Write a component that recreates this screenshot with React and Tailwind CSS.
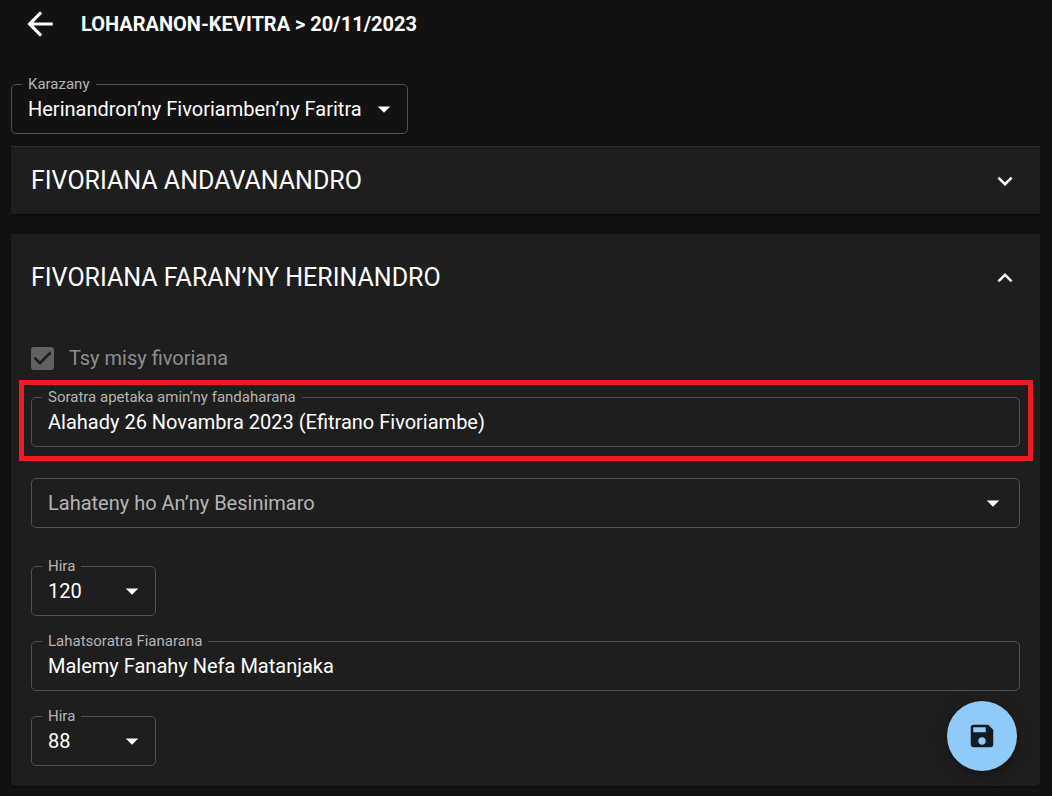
import { useId, useState } from "react";

function Svg({ d, className, viewBox = "0 0 24 24" }) {
  return (
    <svg viewBox={viewBox} fill="currentColor" aria-hidden="true" className={className}>
      <path d={d} />
    </svg>
  );
}

const ICONS = {
  back: "M20 11H7.83l5.59-5.59L12 4l-8 8 8 8 1.41-1.41L7.83 13H20v-2z",
  expand: "M16.59 8.59 12 13.17 7.41 8.59 6 10l6 6 6-6z",
  dropdown: "M7 10l5 5 5-5z",
  save: "M17 3H5c-1.11 0-2 .9-2 2v14c0 1.1.89 2 2 2h14c1.1 0 2-.9 2-2V7l-4-4zm-5 16c-1.66 0-3-1.34-3-3s1.34-3 3-3 3 1.34 3 3-1.34 3-3 3zm3-10H5V5h10v4z",
  check: "M10 17l-5-5 1.41-1.41L10 14.17l7.59-7.59L19 8l-9 9z",
};

function Outline({ label, id, className = "", children }) {
  return (
    <fieldset className={`min-w-0 rounded-[5px] border border-[#515151] pb-[9px] ${className}`}>
      <legend className="ml-[10px] h-[19px] px-[6px] text-[15px] leading-[19px] text-[#b4b4b4]">
        <label htmlFor={id}>{label}</label>
      </legend>
      {children}
    </fieldset>
  );
}

function SelectBox({ id, value, arrow = "right-2", ...rest }) {
  return (
    <div className="relative">
      <select
        id={id}
        defaultValue={value}
        className="block h-[30px] w-full appearance-none bg-transparent pl-4 pr-9 text-[20px] leading-[30px] outline-none"
        {...rest}
      >
        <option>{value}</option>
      </select>
      <Svg
        d={ICONS.dropdown}
        className={`pointer-events-none absolute top-0 size-[30px] text-white ${arrow}`}
      />
    </div>
  );
}

function SelectField({ label, value, className }) {
  const id = useId();
  return (
    <Outline label={label} id={id} className={className}>
      <SelectBox id={id} value={value} />
    </Outline>
  );
}

function TextField({ label, value }) {
  const id = useId();
  return (
    <Outline label={label} id={id} className="w-full">
      <input
        id={id}
        type="text"
        defaultValue={value}
        className="block h-[30px] w-full bg-transparent px-4 text-[20px] leading-[30px] outline-none"
      />
    </Outline>
  );
}

const CARD_SHADOW =
  "shadow-[0_2px_1px_-1px_rgba(0,0,0,0.2),0_1px_1px_0_rgba(0,0,0,0.14),0_1px_3px_0_rgba(0,0,0,0.12)]";

export default function App() {
  const [weekdayOpen, setWeekdayOpen] = useState(false);
  const [weekendOpen, setWeekendOpen] = useState(true);

  return (
    <div className="min-h-screen bg-[#121212] pb-[10px] pl-[11px] pr-3 font-[Roboto,sans-serif] text-white">
      <header className="flex h-12 items-center gap-[22px] pl-[10px]">
        <button type="button" aria-label="Hiverina">
          <Svg d={ICONS.back} className="size-[38px]" />
        </button>
        <h1 className="text-[20px] font-bold leading-[30px]">LOHARANON-KEVITRA &gt; 20/11/2023</h1>
      </header>

      <main className="pt-[27px]">
        <SelectField
          label="Karazany"
          value="Herinandron’ny Fivoriamben’ny Faritra"
          className="w-[397px] max-w-full"
        />

        <section className={`mt-3 border-t border-[#2d2d2d] bg-[#1e1e1e] ${CARD_SHADOW}`}>
          <button
            type="button"
            aria-expanded={weekdayOpen}
            onClick={() => setWeekdayOpen(!weekdayOpen)}
            className="flex h-[67px] w-full items-center justify-between px-5"
          >
            <h2 className="text-[25px] leading-[38px]">FIVORIANA ANDAVANANDRO</h2>
            <Svg d={ICONS.expand} className={weekdayOpen ? "size-[30px] rotate-180" : "size-[30px]"} />
          </button>
        </section>

        <section className={`mt-5 rounded-b-[5px] bg-[#1e1e1e] ${CARD_SHADOW}`}>
          <button
            type="button"
            aria-expanded={weekendOpen}
            onClick={() => setWeekendOpen(!weekendOpen)}
            className="flex h-[87px] w-full items-center justify-between px-5"
          >
            <h2 className="text-[25px] leading-[38px]">FIVORIANA FARAN’NY HERINANDRO</h2>
            <Svg d={ICONS.expand} className={weekendOpen ? "size-[30px] rotate-180" : "size-[30px]"} />
          </button>

          {weekendOpen && (
            <div className="flex flex-col px-5 pb-5 pt-[22px]">
              <label className="flex h-[30px] items-center gap-[15px] self-start text-[20px] text-[#8e8e8e]">
                <span className="grid size-[23px] place-items-center">
                  <input
                    type="checkbox"
                    checked
                    disabled
                    readOnly
                    className="col-start-1 row-start-1 size-[23px] appearance-none rounded-[3px] bg-[#616161]"
                  />
                  <Svg
                    d={ICONS.check}
                    viewBox="3 3 18 18"
                    className="col-start-1 row-start-1 size-[23px] text-[#1e1e1e]"
                  />
                </span>
                Tsy misy fivoriana
              </label>

              <div className="relative mt-[15px]">
                <TextField
                  label="Soratra apetaka amin’ny fandaharana"
                  value="Alahady 26 Novambra 2023 (Efitrano Fivoriambe)"
                />
                <div className="pointer-events-none absolute -bottom-[14px] -left-3 -right-[13px] -top-2 border-[5px] border-[#ed1c24]" />
              </div>

              <div className="mt-[31px] rounded-[5px] border border-[#515151] py-[9px] text-[#b4b4b4]">
                <SelectBox
                  value="Lahateny ho An’ny Besinimaro"
                  arrow="right-[11px]"
                  aria-label="Lahateny ho An’ny Besinimaro"
                />
              </div>

              <div className="mt-[29px] flex flex-col gap-4">
                <SelectField label="Hira" value="120" className="w-[125px]" />
                <TextField label="Lahatsoratra Fianarana" value="Malemy Fanahy Nefa Matanjaka" />
                <SelectField label="Hira" value="88" className="w-[125px]" />
              </div>
            </div>
          )}
        </section>
      </main>

      <button
        type="button"
        aria-label="Tehirizo"
        className="fixed bottom-[25px] right-[35px] flex size-[70px] items-center justify-center rounded-full bg-[#90caf9] text-[#131b22] shadow-[0_3px_5px_-1px_rgba(0,0,0,0.2),0_6px_10px_0_rgba(0,0,0,0.14),0_1px_18px_0_rgba(0,0,0,0.12)]"
      >
        <Svg d={ICONS.save} className="size-[30px]" />
      </button>
    </div>
  );
}
